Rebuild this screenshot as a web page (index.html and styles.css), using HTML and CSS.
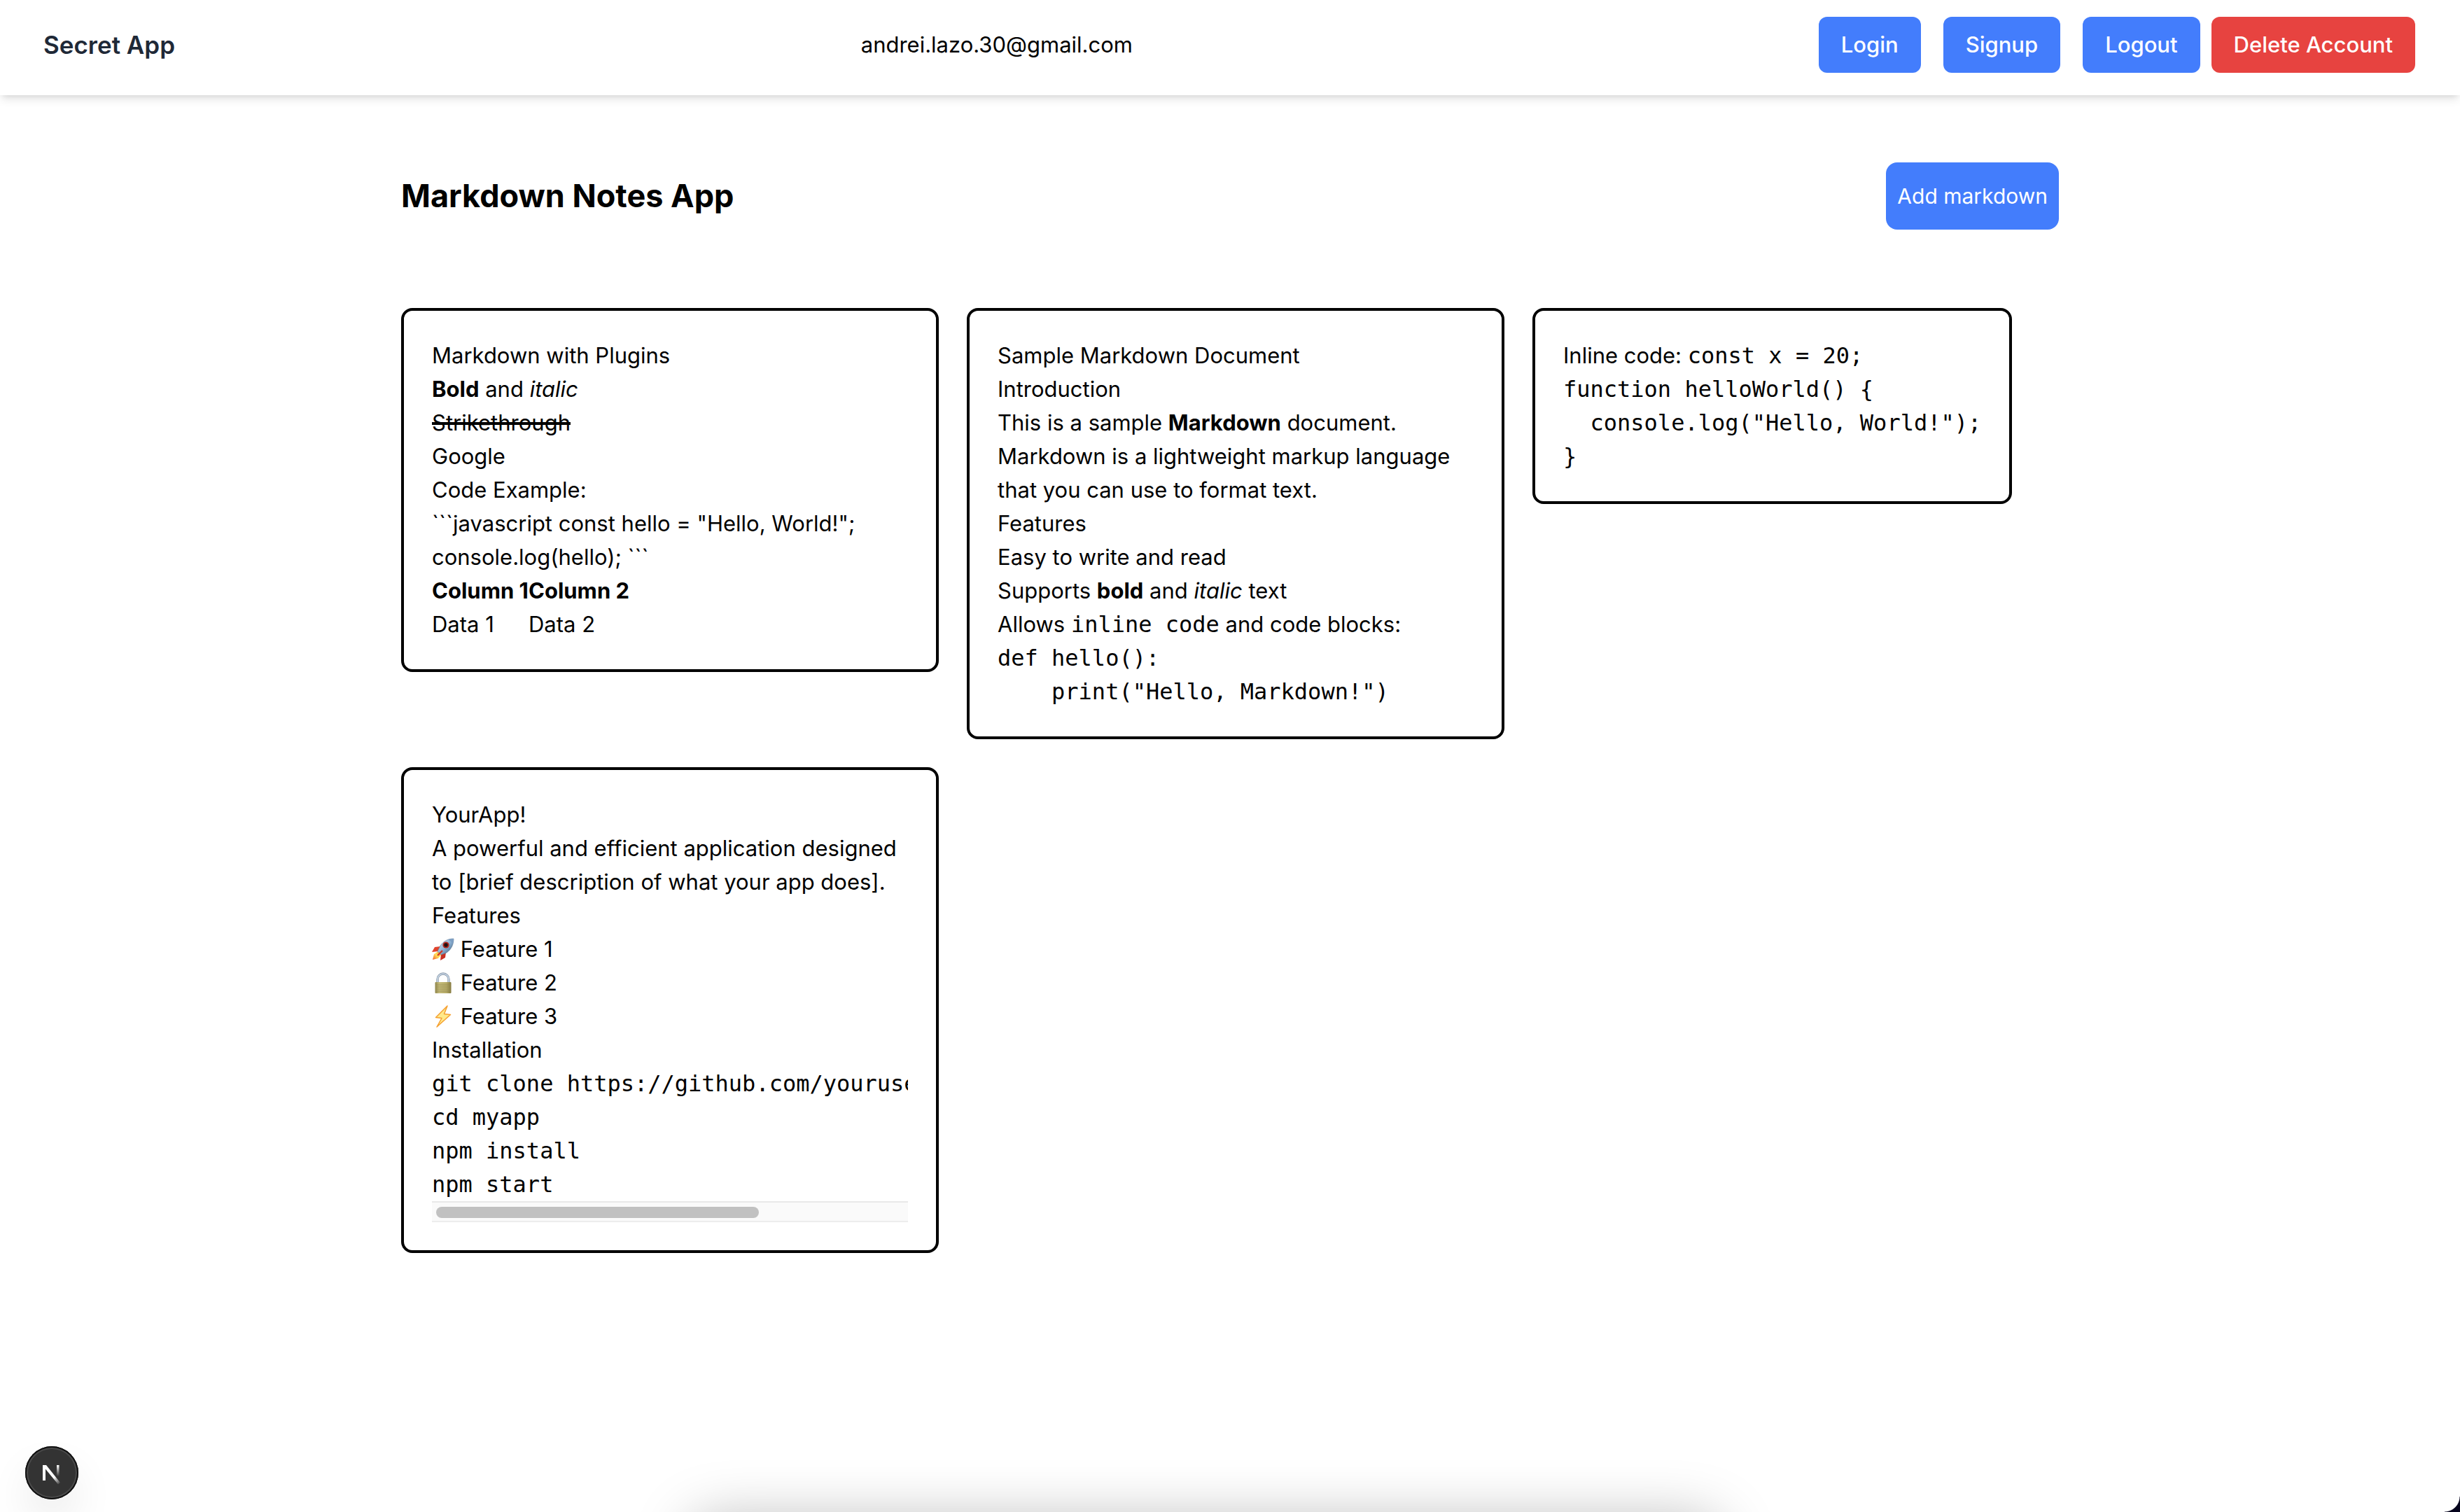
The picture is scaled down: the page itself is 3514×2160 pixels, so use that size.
FILE: index.html
```html
<!DOCTYPE html>
<html lang="en">
<head>
<meta charset="utf-8">
<meta name="viewport" content="width=device-width, initial-scale=1">
<title>Markdown Notes App</title>
<link rel="stylesheet" href="styles.css">
</head>
<body>
<header class="navbar">
  <div class="brand">Secret App</div>
  <div class="user-email">andrei.lazo.30@gmail.com</div>
  <nav class="nav-actions">
    <button type="button" class="btn">Login</button>
    <button type="button" class="btn">Signup</button>
    <div class="account-actions">
      <button type="button" class="btn">Logout</button>
      <button type="button" class="btn btn-danger">Delete Account</button>
    </div>
  </nav>
</header>

<main class="container">
  <div class="page-head">
    <h1 class="page-title">Markdown Notes App</h1>
    <button type="button" class="btn-add">Add markdown</button>
  </div>

  <div class="notes">
    <article class="note">
      <h2>Markdown with Plugins</h2>
      <p><strong>Bold</strong> and <em>italic</em></p>
      <p><del>Strikethrough</del></p>
      <p><a href="#">Google</a></p>
      <h3>Code Example:</h3>
      <p>```javascript const hello = "Hello, World!"; console.log(hello); ```</p>
      <table>
        <thead><tr><th>Column 1</th><th>Column 2</th></tr></thead>
        <tbody><tr><td>Data 1</td><td>Data 2</td></tr></tbody>
      </table>
    </article>

    <article class="note">
      <h2>Sample Markdown Document</h2>
      <h3>Introduction</h3>
      <p>This is a sample <strong>Markdown</strong> document. Markdown is a lightweight markup language that you can use to format text.</p>
      <h3>Features</h3>
      <ul>
        <li>Easy to write and read</li>
        <li>Supports <strong>bold</strong> and <em>italic</em> text</li>
        <li>Allows <code>inline code</code> and code blocks:</li>
      </ul>
<pre><code>def hello():
    print("Hello, Markdown!")</code></pre>
    </article>

    <article class="note">
      <p>Inline code: <code>const x = 20;</code></p>
<pre><code>function helloWorld() {
  console.log("Hello, World!");
}</code></pre>
    </article>

    <article class="note">
      <h2>YourApp!</h2>
      <p>A powerful and efficient application designed to [brief description of what your app does].</p>
      <h3>Features</h3>
      <ul>
        <li><svg class="emoji" viewBox="0 0 32 32" aria-hidden="true">
          <defs>
            <linearGradient id="hull" x1="0" y1="0" x2="1" y2="1"><stop offset="0" stop-color="#e9f1f8"/><stop offset=".5" stop-color="#8fb4d6"/><stop offset="1" stop-color="#35506e"/></linearGradient>
            <linearGradient id="flame" x1="1" y1="0" x2="0" y2="1"><stop offset="0" stop-color="#f7931e"/><stop offset=".5" stop-color="#ffe45c"/><stop offset="1" stop-color="#f05a28"/></linearGradient>
          </defs>
          <path d="M12 12 4 13 0 20l9-1z" fill="#e0432d"/>
          <path d="M20 20l-1 8-7 4 1-9z" fill="#c92f20"/>
          <path d="M9 19 3 23 1 31l8-2 5-6z" fill="url(#flame)"/>
          <path d="M31 1c-8 0-14 3-19 10l-4 8 5 5 8-3C28 16 31 9 31 1z" fill="url(#hull)" stroke="#5d7893" stroke-width=".6"/>
          <path d="M31 1c-3 0-5 .3-7.500 1.200 2 1.300 4.500 3.500 6 6C30.700 6 31 3.500 31 1z" fill="#7d9fc4"/>
          <circle cx="20" cy="10" r="4.600" fill="#b3261c"/><circle cx="20" cy="10" r="2.700" fill="#1d1216"/>
          <path d="M15 18 8 25" stroke="#d63a26" stroke-width="2.400"/>
        </svg> Feature 1</li>
        <li><svg class="emoji" viewBox="0 0 32 32" aria-hidden="true">
          <defs><linearGradient id="brass" x1="0" x2="1"><stop offset="0" stop-color="#8f854a"/><stop offset=".25" stop-color="#c4ba79"/><stop offset=".7" stop-color="#b5aa66"/><stop offset="1" stop-color="#857a3f"/></linearGradient></defs>
          <path d="M8 16v-5a8 8 0 0 1 16 0v5" fill="none" stroke="#8d9bab" stroke-width="3.400"/>
          <path d="M8 16v-5a8 8 0 0 1 16 0v5" fill="none" stroke="#c7d6e6" stroke-width="1.600"/>
          <rect x="4.500" y="15" width="23" height="16" rx="1" fill="url(#brass)"/>
          <path d="M5 19h22M5 22h22M5 25h22M5 28h22" stroke="#928850" stroke-width=".6"/>
        </svg> Feature 2</li>
        <li><svg class="emoji" viewBox="0 0 32 32" aria-hidden="true">
          <path d="M22 1 5.500 17.500l8.500 1L7 31 26.500 13.500l-9-1z" fill="#ffe98a" stroke="#f5a030" stroke-width="1.500" stroke-linejoin="round"/>
        </svg> Feature 3</li>
      </ul>
      <h3>Installation</h3>
<pre tabindex="0"><code>git clone https://github.com/yourusername/myapp.git
cd myapp
npm install
npm start</code></pre>
      <div class="scrollbar" aria-hidden="true"><div class="scrollbar-thumb"></div></div>
    </article>
  </div>
</main>

<button type="button" class="dev-badge" aria-label="Open developer tools">
  <svg viewBox="0 0 76 76" aria-hidden="true">
    <defs>
      <linearGradient id="diag" gradientUnits="userSpaceOnUse" x1="38" y1="43" x2="49" y2="55"><stop offset=".2" stop-color="#fff"/><stop offset="1" stop-color="#fff" stop-opacity="0"/></linearGradient>
      <linearGradient id="stem" gradientUnits="userSpaceOnUse" x1="0" y1="27" x2="0" y2="43"><stop offset="0" stop-color="#fff"/><stop offset="1" stop-color="#fff" stop-opacity="0"/></linearGradient>
    </defs>
    <path d="M25 27h4v22h-4z" fill="#fff"/>
    <path d="M25 27h5l20 25-3 2.500L26 29z" fill="url(#diag)"/>
    <path d="M45 27h3.500v16H45z" fill="url(#stem)"/>
  </svg>
</button>
<div class="dock-shadow" aria-hidden="true"></div>
<div class="window-corner" aria-hidden="true"></div>
</body>
</html>
```

FILE: styles.css
```css
*, *::before, *::after {
  box-sizing: border-box;
  margin: 0;
  padding: 0;
}

body {
  min-height: 100vh;
  background: #fff;
  color: #000;
  font-family: Inter, "Liberation Sans", sans-serif;
  font-size: 31px;
  line-height: 48px;
}

button {
  border: 0;
  font: inherit;
  color: #fff;
  cursor: pointer;
}

/* Top bar */
.navbar {
  display: flex;
  align-items: center;
  justify-content: space-between;
  padding: 24px 64px 32px 62px;
  background: #fff;
  box-shadow: 0 8px 12px -2px rgba(0, 0, 0, 0.1), 0 4px 8px -4px rgba(0, 0, 0, 0.1);
}

.brand {
  font-size: 35px;
  font-weight: 600;
  color: #1f2937;
}

.nav-actions {
  display: flex;
  gap: 32px;
}

.account-actions {
  display: flex;
  gap: 16px;
}

.btn {
  padding: 16px 32px;
  border-radius: 12px;
  background: #437dfc;
  font-weight: 500;
}

.btn-danger {
  background: #e74340;
}

/* Page */
.container {
  max-width: 2560px;
  margin: 0 auto;
  padding: 96px;
}

.page-head {
  display: flex;
  align-items: center;
  justify-content: space-between;
  margin-bottom: 112px;
}

.page-title {
  font-size: 45px;
  font-weight: 700;
}

.btn-add {
  padding: 24px 16px;
  border-radius: 16px;
  background: #437dfc;
  font-size: 30px;
}

/* Notes */
.notes {
  display: flex;
  flex-wrap: wrap;
  align-items: flex-start;
  gap: 40px;
}

.note {
  max-width: 768px;
  padding: 40px;
  border: 4px solid #000;
  border-radius: 16px;
}

.note h2,
.note h3 {
  font-size: inherit;
  font-weight: inherit;
}

.note ul {
  list-style: none;
}

.note a {
  color: inherit;
  text-decoration: none;
}

.note del {
  text-decoration-thickness: 4px;
}

.note table {
  border-collapse: collapse;
  text-align: left;
}

.note code {
  font-family: "DejaVu Sans Mono", monospace;
  font-size: 32px;
  line-height: 1;
}

.note pre {
  overflow-x: auto;
  scrollbar-width: none;
}

.note pre code {
  display: block;
  line-height: 48px;
}

.scrollbar {
  height: 30px;
  padding: 6px;
  background: #fafafa;
  border-top: 2px solid #e8e8e8;
  border-bottom: 2px solid #ededed;
}

.scrollbar-thumb {
  width: 69%;
  height: 16px;
  border-radius: 8px;
  background: #c1c1c1;
}

.emoji {
  width: 32px;
  height: 32px;
  vertical-align: -5px;
}

/* Overlays */
.dev-badge {
  position: fixed;
  left: 36px;
  bottom: 18px;
  width: 76px;
  height: 76px;
  border-radius: 50%;
  background: #333;
  box-shadow: inset 0 0 0 2px #111, inset 0 0 0 4px #4a4a4a, 0 32px 64px -8px rgba(0, 0, 0, 0.12);
}

.dev-badge svg {
  display: block;
  width: 100%;
}

.dock-shadow {
  position: fixed;
  left: 28%;
  right: 30%;
  top: 100%;
  height: 120px;
  border-radius: 40px;
  box-shadow: 0 8px 80px rgba(0, 0, 0, 0.26);
}

.window-corner {
  position: fixed;
  right: 0;
  bottom: 0;
  width: 22px;
  height: 22px;
  background: radial-gradient(circle at 0 0, transparent 21px, #05031c 22px);
}
```
